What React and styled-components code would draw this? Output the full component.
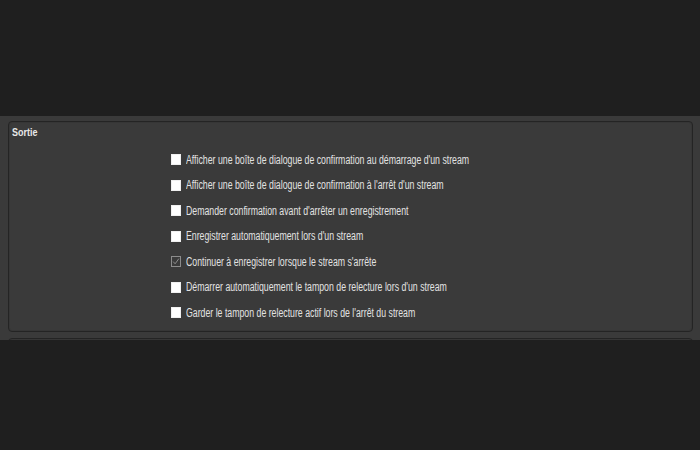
import React from "react";
import styled, { createGlobalStyle } from "styled-components";

const Global = createGlobalStyle`
  html, body { margin: 0; padding: 0; background: #1f1f1f; }
  body { width: 700px; height: 450px; overflow: hidden; font-family: "Liberation Sans", Arial, sans-serif; }
`;

const Page = styled.div`
  width: 700px;
  height: 450px;
  display: flex;
  flex-direction: column;
  background: #1f1f1f;
`;

const TopBand = styled.div`
  height: 116px;
  flex: none;
`;

const Panel = styled.div`
  height: 224px;
  flex: none;
  background: #3a3a3a;
  overflow: hidden;
  display: flex;
  flex-direction: column;
  padding: 5px 7px 0 8px;
  box-sizing: border-box;
  gap: 6px;
`;

const GroupBox = styled.div`
  flex: none;
  height: ${(p) => p.$height}px;
  border: 1px solid #242424;
  border-radius: 4px;
  box-sizing: border-box;
  background: #3a3a3a;
  box-shadow: inset 0 0 0 1px #363636;
  display: flex;
  flex-direction: column;
`;

const Title = styled.div`
  padding: 3px 0 0 3px;
  height: 14px;
  line-height: 14px;
  font-size: 11.5px;
  font-weight: bold;
  color: #e8e8e8;
  white-space: nowrap;
`;

const Squeeze = styled.span`
  display: inline-block;
  transform: scaleX(${(p) => p.$sx});
  transform-origin: left center;
`;

const List = styled.div`
  margin-top: 8px;
  padding-left: 162px;
  display: flex;
  flex-direction: column;
`;

const Row = styled.div`
  height: 25.5px;
  display: flex;
  align-items: center;
  gap: 5px;
`;

const Box = styled.span`
  flex: none;
  width: 10px;
  height: 11px;
  box-sizing: border-box;
  background: ${(p) => (p.$disabled ? "#3a3a3a" : "#ffffff")};
  border: 1px solid ${(p) => (p.$disabled ? "#8c8c8c" : "#f0f0f0")};
  display: flex;
  align-items: center;
  justify-content: center;
`;

const Label = styled.span`
  font-size: 12.5px;
  line-height: 14px;
  color: #e2e2e2;
  white-space: nowrap;
`;

const items = [
  { text: "Afficher une boîte de dialogue de confirmation au démarrage d'un stream" },
  { text: "Afficher une boîte de dialogue de confirmation à l'arrêt d'un stream" },
  { text: "Demander confirmation avant d'arrêter un enregistrement" },
  { text: "Enregistrer automatiquement lors d'un stream" },
  { text: "Continuer à enregistrer lorsque le stream s'arrête", disabled: true },
  { text: "Démarrer automatiquement le tampon de relecture lors d'un stream" },
  { text: "Garder le tampon de relecture actif lors de l'arrêt du stream" },
];

export default function App() {
  return (
    <Page>
      <Global />
      <TopBand />
      <Panel>
        <GroupBox $height={211}>
          <Title>
            <Squeeze $sx={0.78}>Sortie</Squeeze>
          </Title>
          <List>
            {items.map((it) => (
              <Row key={it.text}>
                <Box $disabled={it.disabled}>
                  {it.disabled && (
                    <svg width="8" height="9" viewBox="0 0 8 9">
                      <path d="M1.2 4.6 L3.1 6.8 L6.9 1.6" fill="none" stroke="#8c8c8c" strokeWidth="1" />
                    </svg>
                  )}
                </Box>
                <Label>
                  <Squeeze $sx={0.7}>{it.text}</Squeeze>
                </Label>
              </Row>
            ))}
          </List>
        </GroupBox>
        <GroupBox $height={60} />
      </Panel>
    </Page>
  );
}
